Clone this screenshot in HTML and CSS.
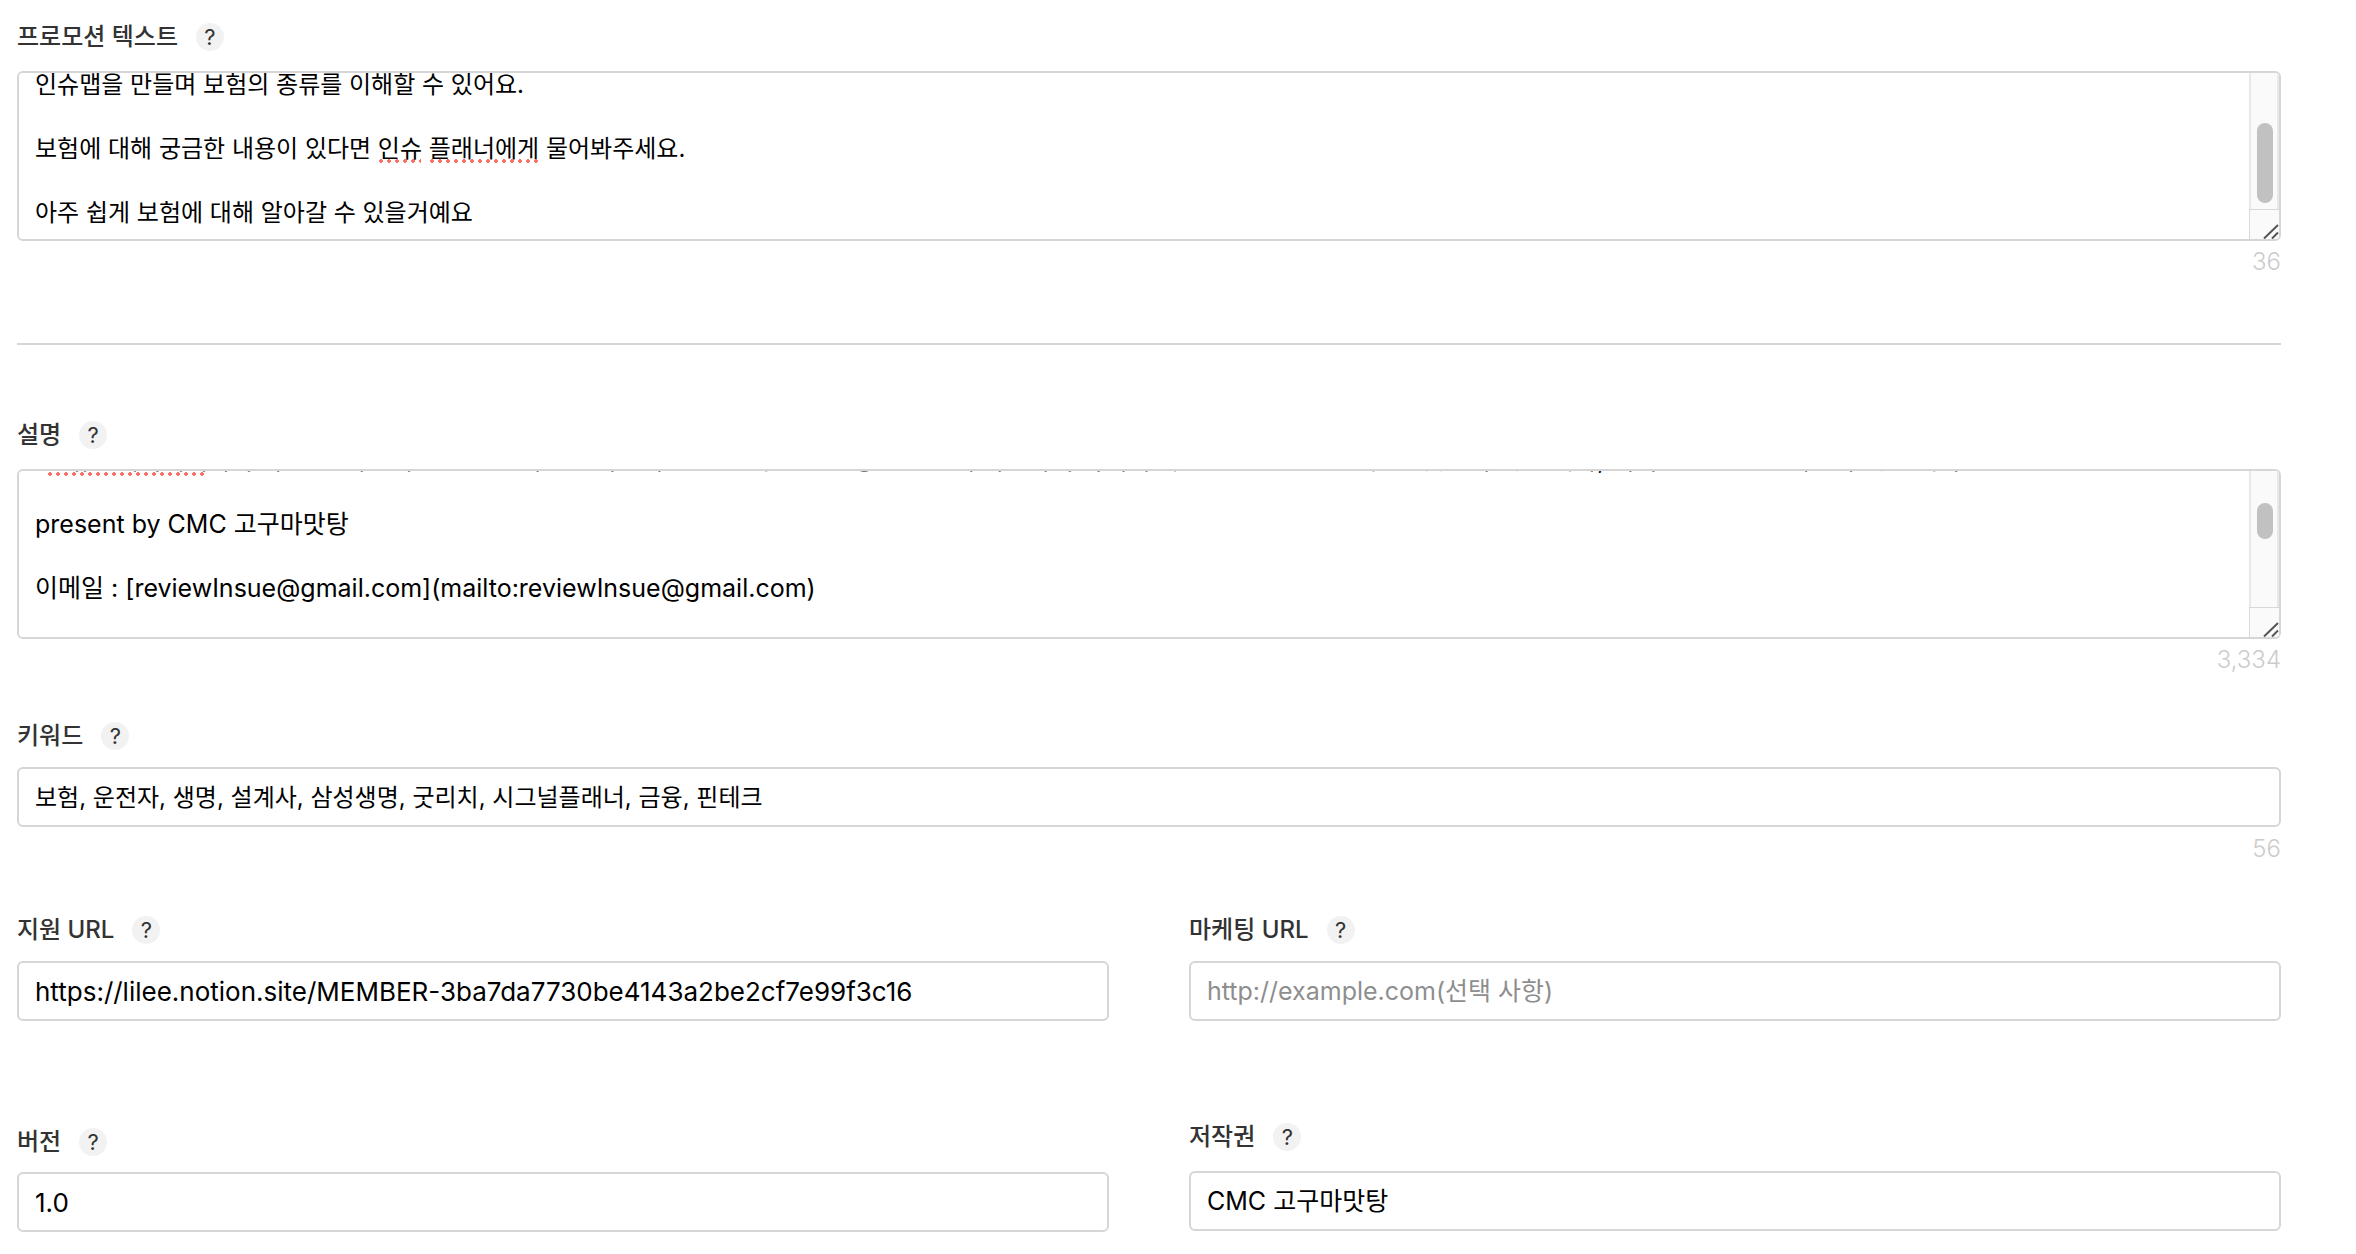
FILE: index.html
```html
<!DOCTYPE html>
<html lang="ko">
<head>
<meta charset="utf-8">
<meta name="viewport" content="width=device-width, initial-scale=1">
<title>앱 정보</title>
<link rel="stylesheet" href="styles.css">
</head>
<body>
<form class="form">
  <section class="field field-area">
    <div class="field-head">
      <label for="promo">프로모션 텍스트</label>
      <button type="button" class="help" aria-label="도움말">?</button>
    </div>
    <div class="area-wrap">
      <textarea id="promo" class="control area" spellcheck="false" data-scroll="111">



인슈맵을 만들며 보험의 종류를 이해할 수 있어요.

보험에 대해 궁금한 내용이 있다면 인슈 플래너에게 물어봐주세요.

아주 쉽게 보험에 대해 알아갈 수 있을거예요</textarea>
      <span class="typo typo-insue"></span>
      <span class="typo typo-planner"></span>
      <div class="scrollbar" aria-hidden="true">
        <div class="track"><div class="thumb thumb-promo"></div></div>
        <svg class="grip" viewBox="0 0 29 29"><path d="M14 28.500 28 15M22 28.500 28 22.500"/></svg>
      </div>
    </div>
    <p class="count">36</p>
  </section>

  <hr class="divider">

  <section class="field field-area">
    <div class="field-head">
      <label for="desc">설명</label>
      <button type="button" class="help" aria-label="도움말">?</button>
    </div>
    <div class="area-wrap">
      <textarea id="desc" class="control area text-mixed" spellcheck="false" data-scroll="165">




-인슈플래너에게 누구나 쉽고 빠르게 보험을 물어보고 나만의 맵으로 내 보험 현황을 한눈에 확인하며 나에게 꼭 필요한 보장을 모두 잘 찾을 수 있습니다, 어려운 보험도 함께할 수 있습니다

present by CMC 고구마맛탕

이메일 : [reviewInsue@gmail.com](mailto:reviewInsue@gmail.com)









</textarea>
      <span class="typo typo-clipped"></span>
      <div class="scrollbar" aria-hidden="true">
        <div class="track"><div class="thumb thumb-desc"></div></div>
        <svg class="grip" viewBox="0 0 29 29"><path d="M14 28.500 28 15M22 28.500 28 22.500"/></svg>
      </div>
    </div>
    <p class="count">3,334</p>
  </section>

  <section class="field field-keyword">
    <div class="field-head">
      <label for="keyword">키워드</label>
      <button type="button" class="help" aria-label="도움말">?</button>
    </div>
    <input id="keyword" class="control text-korean" type="text" value="보험, 운전자, 생명, 설계사, 삼성생명, 굿리치, 시그널플래너, 금융, 핀테크">
    <p class="count">56</p>
  </section>

  <div class="row row-url">
    <section class="field">
      <div class="field-head">
        <label for="support">지원 URL</label>
        <button type="button" class="help" aria-label="도움말">?</button>
      </div>
      <input id="support" class="control text-latin" type="url" value="https://lilee.notion.site/MEMBER-3ba7da7730be4143a2be2cf7e99f3c16">
    </section>
    <section class="field">
      <div class="field-head">
        <label for="marketing">마케팅 URL</label>
        <button type="button" class="help" aria-label="도움말">?</button>
      </div>
      <input id="marketing" class="control text-mixed" type="url" placeholder="http://example.com(선택 사항)">
    </section>
  </div>

  <div class="row row-meta">
    <section class="field field-version">
      <div class="field-head">
        <label for="version">버전</label>
        <button type="button" class="help" aria-label="도움말">?</button>
      </div>
      <input id="version" class="control text-latin" type="text" value="1.0">
    </section>
    <section class="field field-copyright">
      <div class="field-head">
        <label for="copyright">저작권</label>
        <button type="button" class="help" aria-label="도움말">?</button>
      </div>
      <input id="copyright" class="control text-korean text-mixed" type="text" value="CMC 고구마맛탕">
    </section>
  </div>
</form>
<script src="form.js"></script>
</body>
</html>
```

FILE: styles.css
```css
* {
  box-sizing: border-box;
}

body {
  margin: 0;
  background: #fff;
  color: #333;
  font-family: Inter, "Noto Sans CJK KR", sans-serif;
  font-size: 24px;
}

.form {
  padding: 23px 75px 20px 17px;
}

.field {
  display: flex;
  flex-direction: column;
  gap: 17px;
}

.field-area {
  gap: 20px;
}

.field-head {
  display: flex;
  align-items: center;
  gap: 18px;
  height: 28px;
  font-weight: 500;
  line-height: 28px;
}

.help {
  width: 28px;
  height: 28px;
  padding: 0;
  border: 0;
  border-radius: 50%;
  background: #f2f2f2;
  color: #333;
  font: 22px/28px Inter, sans-serif;
  text-align: center;
}

.control {
  display: block;
  width: 100%;
  height: 60px;
  margin: 0;
  padding: 0 16px;
  border: 2px solid #d6d6d6;
  border-radius: 6px;
  outline: 0;
  background: #fff;
  color: #000;
  font: inherit;
}

.control::placeholder {
  color: #8e8e8e;
  opacity: 1;
}

.text-korean {
  padding-bottom: 4px;
}

.text-mixed {
  font-size: 25px;
}

.text-latin {
  font-size: 26px;
}

.area-wrap {
  position: relative;
  overflow: hidden;
}

.area {
  height: 170px;
  padding: 10px 46px 10px 16px;
  line-height: 32px;
  resize: none;
  overflow-y: scroll;
  scrollbar-width: none;
}

.scrollbar {
  position: absolute;
  top: 2px;
  right: 2px;
  bottom: 2px;
  display: flex;
  flex-direction: column;
  width: 30px;
  overflow: hidden;
  border-radius: 0 4px 4px 0;
  background: #fafafa;
  pointer-events: none;
}

.track {
  flex: 1;
  padding: 0 6px;
  border: solid #e8e8e8;
  border-width: 0 2px;
}

.thumb {
  width: 16px;
  border-radius: 8px;
  background: #c1c1c1;
}

.thumb-promo {
  height: 80px;
  margin-top: 50px;
}

.thumb-desc {
  height: 36px;
  margin-top: 32px;
}

.grip {
  display: block;
  width: 30px;
  height: 30px;
  border: solid #d9d9d9;
  border-width: 1px 0 0 1px;
  fill: none;
  stroke: #555;
  stroke-width: 2px;
}

.typo {
  position: absolute;
  height: 4px;
  background: radial-gradient(circle, #fb7268 0 2px, transparent 2px) 0 0 / 8px 4px;
  pointer-events: none;
}

.typo-insue {
  top: 88px;
  left: 360px;
  width: 44px;
}

.typo-planner {
  top: 88px;
  left: 411px;
  width: 112px;
}

.typo-clipped {
  top: 3px;
  left: 29px;
  width: 160px;
}

.count {
  margin: -13px 0 0;
  color: #ccc;
  font-size: 24px;
  font-weight: 300;
  line-height: 28px;
  text-align: right;
}

.field-keyword .count {
  margin-top: -9px;
}

.divider {
  height: 2px;
  margin: 67px 0 76px;
  border: 0;
  background: #d6d6d6;
}

.field-keyword {
  margin-top: 48px;
}

.row {
  display: grid;
  grid-template-columns: 1fr 1fr;
  gap: 80px;
  align-items: start;
}

.row-url {
  margin-top: 53px;
}

.row-meta {
  margin-top: 102px;
}

.field-version {
  padding-top: 5px;
  gap: 16px;
}

.field-copyright {
  gap: 20px;
}
```

FILE: form.js
```js
document.querySelectorAll("textarea[data-scroll]").forEach(function (area) {
  area.scrollTop = Number(area.dataset.scroll);
});
```
